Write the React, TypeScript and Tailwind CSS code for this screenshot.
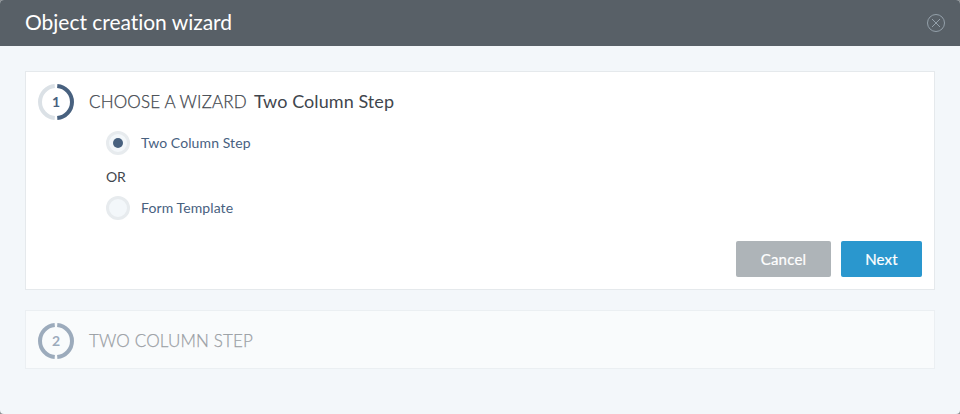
type Tone = { left: string; right: string };

function StepBadge({ number, tone }: { number: number; tone: Tone }) {
  return (
    <svg width="36" height="36" viewBox="0 0 36 36" fill="none" strokeWidth="4" className="shrink-0">
      <path d="M16.75 2.05A16 16 0 0 0 16.75 33.95" stroke={tone.left} />
      <path d="M19.25 2.05A16 16 0 0 1 19.25 33.95" stroke={tone.right} />
      <text x="18" y="23" textAnchor="middle" className="fill-[#48617f] stroke-none text-[14px] font-bold">
        {number}
      </text>
    </svg>
  );
}

function Radio({ label, checked }: { label: string; checked?: boolean }) {
  return (
    <label className="flex h-6 items-center">
      <span className="flex size-6 items-center justify-center rounded-full border-3 border-[#e7ebee] bg-[#f3f7fa]">
        {checked && <span className="size-2.5 rounded-full bg-[#48617f]" />}
      </span>
      <span className="ml-[11px] text-[14px] leading-6 tracking-[0.1px] text-[#48617f]">{label}</span>
    </label>
  );
}

export default function App() {
  return (
    <div className="h-[414px] w-[960px] bg-[#8b8f92] font-['Lato',sans-serif]">
      <div className="h-full overflow-hidden rounded-[4px] bg-[#f3f7fa]">
        <header className="flex h-[46px] items-center justify-between bg-[#586067] pr-[15px] pl-[25px]">
          <h1 className="pb-[3px] text-[21px] leading-6 tracking-[-0.03px] text-white">Object creation wizard</h1>
          <svg width="18" height="18" viewBox="0 0 18 18" fill="none" stroke="#94a0aa">
            <circle cx="9" cy="9" r="8.5" />
            <path d="M5 5l8 8M13 5l-8 8" />
          </svg>
        </header>
        <main className="flex flex-col gap-5 px-[25px] pt-[25px]">
          <section className="flex h-[219px] flex-col border border-[#e5e9ec] bg-white p-3">
            <div className="flex h-9 items-center">
              <StepBadge number={1} tone={{ left: "#dbe1e6", right: "#48617f" }} />
              <h2 className="ml-[15px] flex items-baseline pb-0.5 text-[18px] leading-6 text-[#3f464d]">
                <span className="w-[165px] text-[17px] font-light tracking-[0.17px] whitespace-nowrap [-webkit-text-stroke:0.25px]">
                  CHOOSE A WIZARD
                </span>
                <span className="tracking-[0.07px]">Two Column Step</span>
              </h2>
            </div>
            <div className="mt-[11px] ml-[68px] text-[14px] text-[#3f464d]">
              <Radio label="Two Column Step" checked />
              <div className="my-2.5 h-[21px] leading-6 tracking-[-0.3px]">OR</div>
              <Radio label="Form Template" />
            </div>
            <div className="mt-auto flex justify-end gap-2.5 text-[15px] tracking-[0.2px] text-white [-webkit-text-stroke:0.2px]">
              <button className="h-9 w-[95px] rounded-[2px] bg-[#aeb4b8]">Cancel</button>
              <button className="h-9 w-[81px] rounded-[2px] bg-[#2a97ce]">Next</button>
            </div>
          </section>
          <section className="h-[59px] border border-[#e5e9ec] bg-white p-3 opacity-50">
            <div className="flex items-center">
              <StepBadge number={2} tone={{ left: "#48617f", right: "#48617f" }} />
              <h2 className="ml-[15px] pb-px text-[17px] leading-6 font-light tracking-[0.15px] text-[#3f464d] [-webkit-text-stroke:0.25px]">
                TWO COLUMN STEP
              </h2>
            </div>
          </section>
        </main>
      </div>
    </div>
  );
}
